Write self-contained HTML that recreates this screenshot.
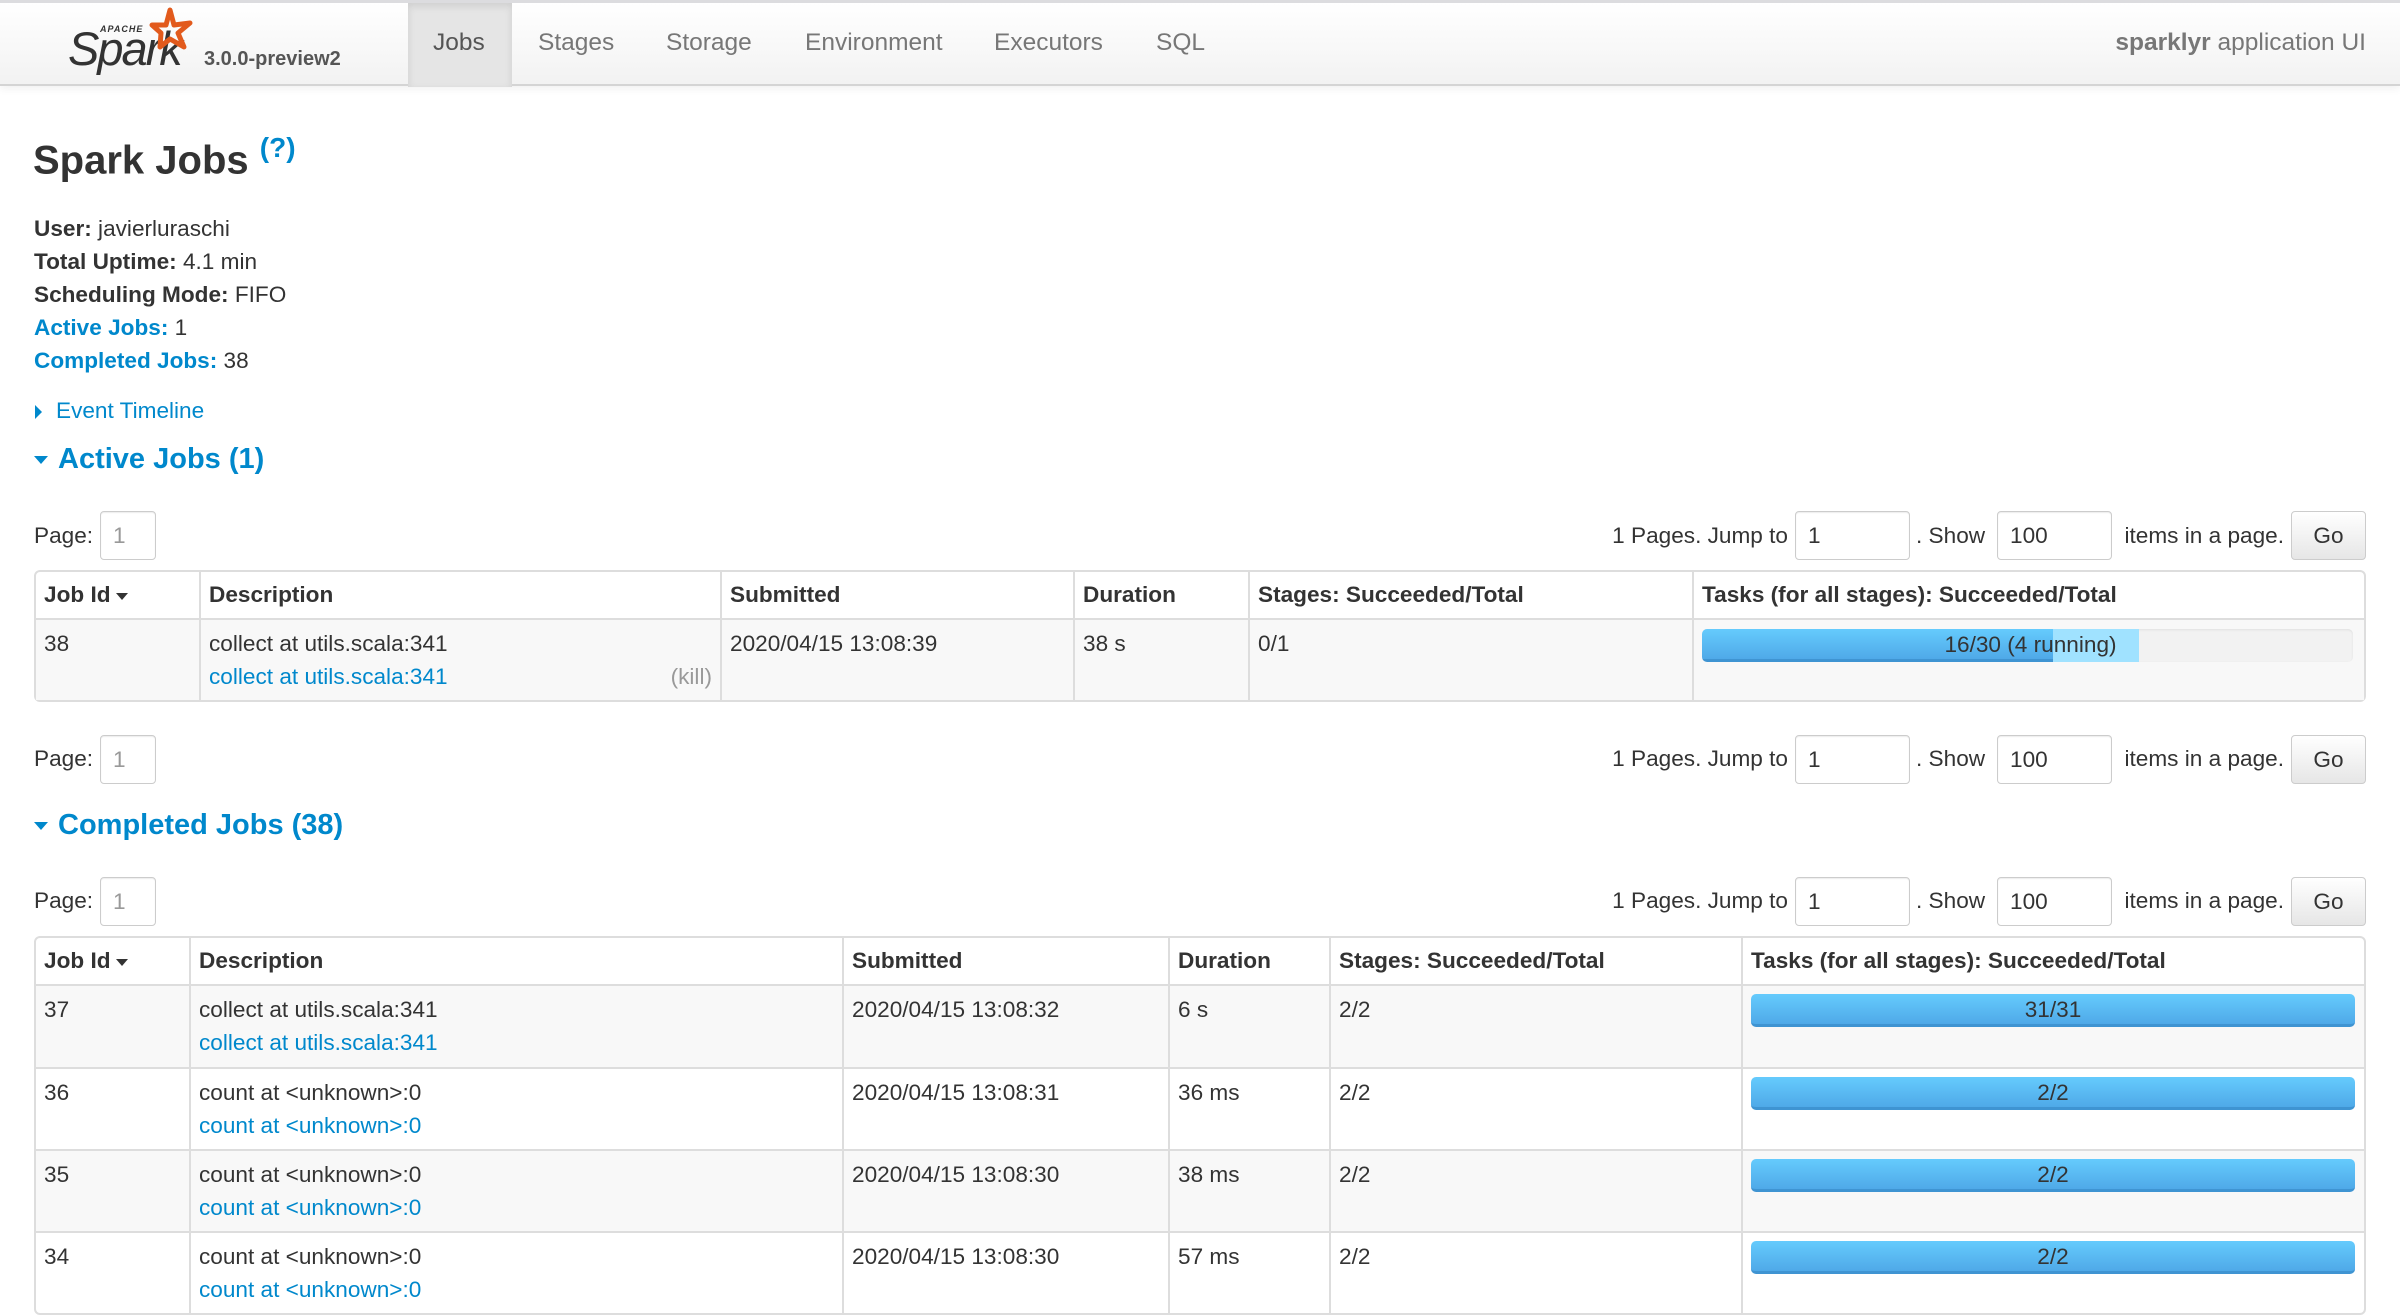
<!DOCTYPE html>
<html><head><meta charset="utf-8"><style>
*{box-sizing:border-box;margin:0;padding:0}
body{width:2400px;height:1311px;overflow:hidden;background:#fff;font-family:"Liberation Sans",Arial,sans-serif;font-size:22.6px;color:#333;position:relative}
.a{position:absolute}
.nav{left:0;top:0;width:2400px;height:86px;border-top:3px solid #dcdcdf;background:linear-gradient(#fff,#f2f2f2);border-bottom:2px solid #d4d4d4;box-shadow:0 3px 8px rgba(0,0,0,.06)}
.nav .l{position:absolute;top:26px;font-size:24.5px;color:#777}
.blue{color:#0088cc}
b{font-weight:bold}
.info div{height:33px;line-height:33px}
.sec{font-size:29px;font-weight:bold;color:#0088cc}
.tri{display:inline-block;width:0;height:0;border-left:7px solid transparent;border-right:7px solid transparent;border-top:8px solid #0088cc;vertical-align:middle;margin-right:10px}
.inp{position:absolute;border:1px solid #ccc;border-radius:4px;background:#fff;height:49px;line-height:47px;padding-left:12px;box-shadow:inset 0 1px 1px rgba(0,0,0,.08)}
.go{position:absolute;border:1px solid #ccc;border-radius:4px;background:linear-gradient(#fff,#e6e6e6);height:49px;line-height:47px;text-align:center;width:75px}
.r{position:absolute;text-align:right;white-space:nowrap}
table{position:absolute;border-collapse:separate;border-spacing:0;border:2px solid #ddd;border-radius:6px;table-layout:fixed}
td,th{border-left:2px solid #ddd;border-top:2px solid #ddd;vertical-align:top;text-align:left;padding:7px 8px;line-height:33px}
th{border-top:none;height:46px;font-weight:bold;padding-top:6px}
tr td:first-child,tr th:first-child{border-left:none}
thead tr th{border-bottom:2px solid #ddd}
tbody tr:first-child td{border-top:none}
.g td{background:#f8f8f8}
.bar{height:33px;border-radius:5px;background:linear-gradient(#65cbfd,#4fa9e8);border-bottom:3px solid #3f94d2;text-align:center;line-height:32px;margin-top:1px;margin-right:1px;color:#333}
.srt{display:inline-block;width:0;height:0;border-left:6px solid transparent;border-right:6px solid transparent;border-top:7px solid #333;vertical-align:middle;margin-left:5px}
</style></head><body>
<div class="a nav">
 <svg class="a" style="left:60px;top:2px" width="140" height="72" viewBox="0 0 140 72">
  <text x="40" y="27" font-family="Liberation Sans" font-size="9" font-weight="bold" fill="#333" letter-spacing="1" font-style="italic">APACHE</text>
  <text x="8" y="60" font-family="Liberation Sans" font-size="47" font-style="italic" fill="#333" letter-spacing="-2">Spark</text>
  <path d="M110 5 L114 20 L130 18 L118 28 L124 42 L110 34 L100 42 L101 28 L92 20 L106 20 Z" fill="none" stroke="#e25a1c" stroke-width="5" stroke-linejoin="round"/>
 </svg>
 <div class="a" style="left:204px;top:45px;font-size:20px;font-weight:bold;color:#555">3.0.0-preview2</div>
 <div class="a" style="left:408px;top:0;width:104px;height:84px;background:#e5e5e5;box-shadow:inset 0 3px 8px rgba(0,0,0,.1)"></div>
 <div class="l" style="left:433px;color:#555">Jobs</div>
 <div class="l" style="left:538px">Stages</div>
 <div class="l" style="left:666px">Storage</div>
 <div class="l" style="left:805px">Environment</div>
 <div class="l" style="left:994px">Executors</div>
 <div class="l" style="left:1156px">SQL</div>
 <div class="r" style="right:34px;top:26px;font-size:24.5px;color:#777"><b>sparklyr</b> application UI</div>
</div>

<div class="a" style="left:33px;top:134px;font-size:40px;font-weight:bold;color:#333">Spark Jobs <sup class="blue" style="font-size:28px;position:relative;top:-2px">(?)</sup></div>

<div class="a info" style="left:34px;top:212px">
 <div><b>User:</b> javierluraschi</div>
 <div><b>Total Uptime:</b> 4.1 min</div>
 <div><b>Scheduling Mode:</b> FIFO</div>
 <div><b class="blue">Active Jobs:</b> 1</div>
 <div><b class="blue">Completed Jobs:</b> 38</div>
</div>
<div class="a blue" style="left:35px;top:398px"><span style="display:inline-block;border-top:7px solid transparent;border-bottom:7px solid transparent;border-left:7px solid #0088cc;vertical-align:middle;margin-right:14px"></span>Event Timeline</div>
<div class="a sec" style="left:34px;top:443px"><span class="tri"></span>Active Jobs (1)</div>

<div class="a" style="left:34px;top:523px">Page:</div><div class="inp" style="left:100px;top:511px;width:56px;color:#999">1</div>
<div class="r" style="right:612px;top:523px">1 Pages. Jump to</div><div class="inp" style="left:1795px;top:511px;width:115px">1</div>
<div class="a" style="left:1916px;top:523px">. Show</div><div class="inp" style="left:1997px;top:511px;width:115px">100</div>
<div class="r" style="right:116px;top:523px">items in a page.</div><div class="go" style="left:2291px;top:511px">Go</div>

<table style="left:34px;top:570px;width:2332px">
<colgroup><col style="width:163px"><col style="width:521px"><col style="width:353px"><col style="width:175px"><col style="width:444px"><col></colgroup>
<thead><tr><th>Job Id<span class="srt"></span></th><th>Description</th><th>Submitted</th><th>Duration</th><th>Stages: Succeeded/Total</th><th>Tasks (for all stages): Succeeded/Total</th></tr></thead>
<tbody><tr class="g" style="height:80px"><td>38</td><td>collect at utils.scala:341<br><span class="blue">collect at utils.scala:341</span><span style="float:right;color:#999">(kill)</span></td><td>2020/04/15 13:08:39</td><td>38 s</td><td>0/1</td>
<td><div style="position:relative;height:33px;margin-top:2px;border-radius:5px;background:#f2f2f2;box-shadow:inset 0 1px 2px rgba(0,0,0,.08);margin-right:3px;overflow:hidden"><div style="position:absolute;left:0;top:0;width:351px;height:33px;background:linear-gradient(#65cbfd,#4fa9e8);border-bottom:3px solid #3f94d2"></div><div style="position:absolute;left:351px;top:0;width:86px;height:33px;background:#a0e2ff"></div><div style="position:absolute;left:0;width:437px;top:0;text-align:center;line-height:32px;padding-left:220px;white-space:nowrap">16/30 (4 running)</div></div></td></tr></tbody>
</table>

<div class="a" style="left:34px;top:746px">Page:</div><div class="inp" style="left:100px;top:735px;width:56px;color:#999">1</div>
<div class="r" style="right:612px;top:746px">1 Pages. Jump to</div><div class="inp" style="left:1795px;top:735px;width:115px">1</div>
<div class="a" style="left:1916px;top:746px">. Show</div><div class="inp" style="left:1997px;top:735px;width:115px">100</div>
<div class="r" style="right:116px;top:746px">items in a page.</div><div class="go" style="left:2291px;top:735px">Go</div>

<div class="a sec" style="left:34px;top:809px"><span class="tri"></span>Completed Jobs (38)</div>

<div class="a" style="left:34px;top:888px">Page:</div><div class="inp" style="left:100px;top:877px;width:56px;color:#999">1</div>
<div class="r" style="right:612px;top:888px">1 Pages. Jump to</div><div class="inp" style="left:1795px;top:877px;width:115px">1</div>
<div class="a" style="left:1916px;top:888px">. Show</div><div class="inp" style="left:1997px;top:877px;width:115px">100</div>
<div class="r" style="right:116px;top:888px">items in a page.</div><div class="go" style="left:2291px;top:877px">Go</div>

<table style="left:34px;top:936px;width:2332px">
<colgroup><col style="width:153px"><col style="width:653px"><col style="width:326px"><col style="width:161px"><col style="width:412px"><col></colgroup>
<thead><tr><th>Job Id<span class="srt"></span></th><th>Description</th><th>Submitted</th><th>Duration</th><th>Stages: Succeeded/Total</th><th>Tasks (for all stages): Succeeded/Total</th></tr></thead>
<tbody>
<tr class="g" style="height:81px"><td>37</td><td>collect at utils.scala:341<br><span class="blue">collect at utils.scala:341</span></td><td>2020/04/15 13:08:32</td><td>6 s</td><td>2/2</td><td><div class="bar">31/31</div></td></tr>
<tr style="height:82px"><td>36</td><td>count at &lt;unknown&gt;:0<br><span class="blue">count at &lt;unknown&gt;:0</span></td><td>2020/04/15 13:08:31</td><td>36 ms</td><td>2/2</td><td><div class="bar">2/2</div></td></tr>
<tr class="g" style="height:82px"><td>35</td><td>count at &lt;unknown&gt;:0<br><span class="blue">count at &lt;unknown&gt;:0</span></td><td>2020/04/15 13:08:30</td><td>38 ms</td><td>2/2</td><td><div class="bar">2/2</div></td></tr>
<tr style="height:82px"><td>34</td><td>count at &lt;unknown&gt;:0<br><span class="blue">count at &lt;unknown&gt;:0</span></td><td>2020/04/15 13:08:30</td><td>57 ms</td><td>2/2</td><td><div class="bar">2/2</div></td></tr>
</tbody></table>
</body></html>
